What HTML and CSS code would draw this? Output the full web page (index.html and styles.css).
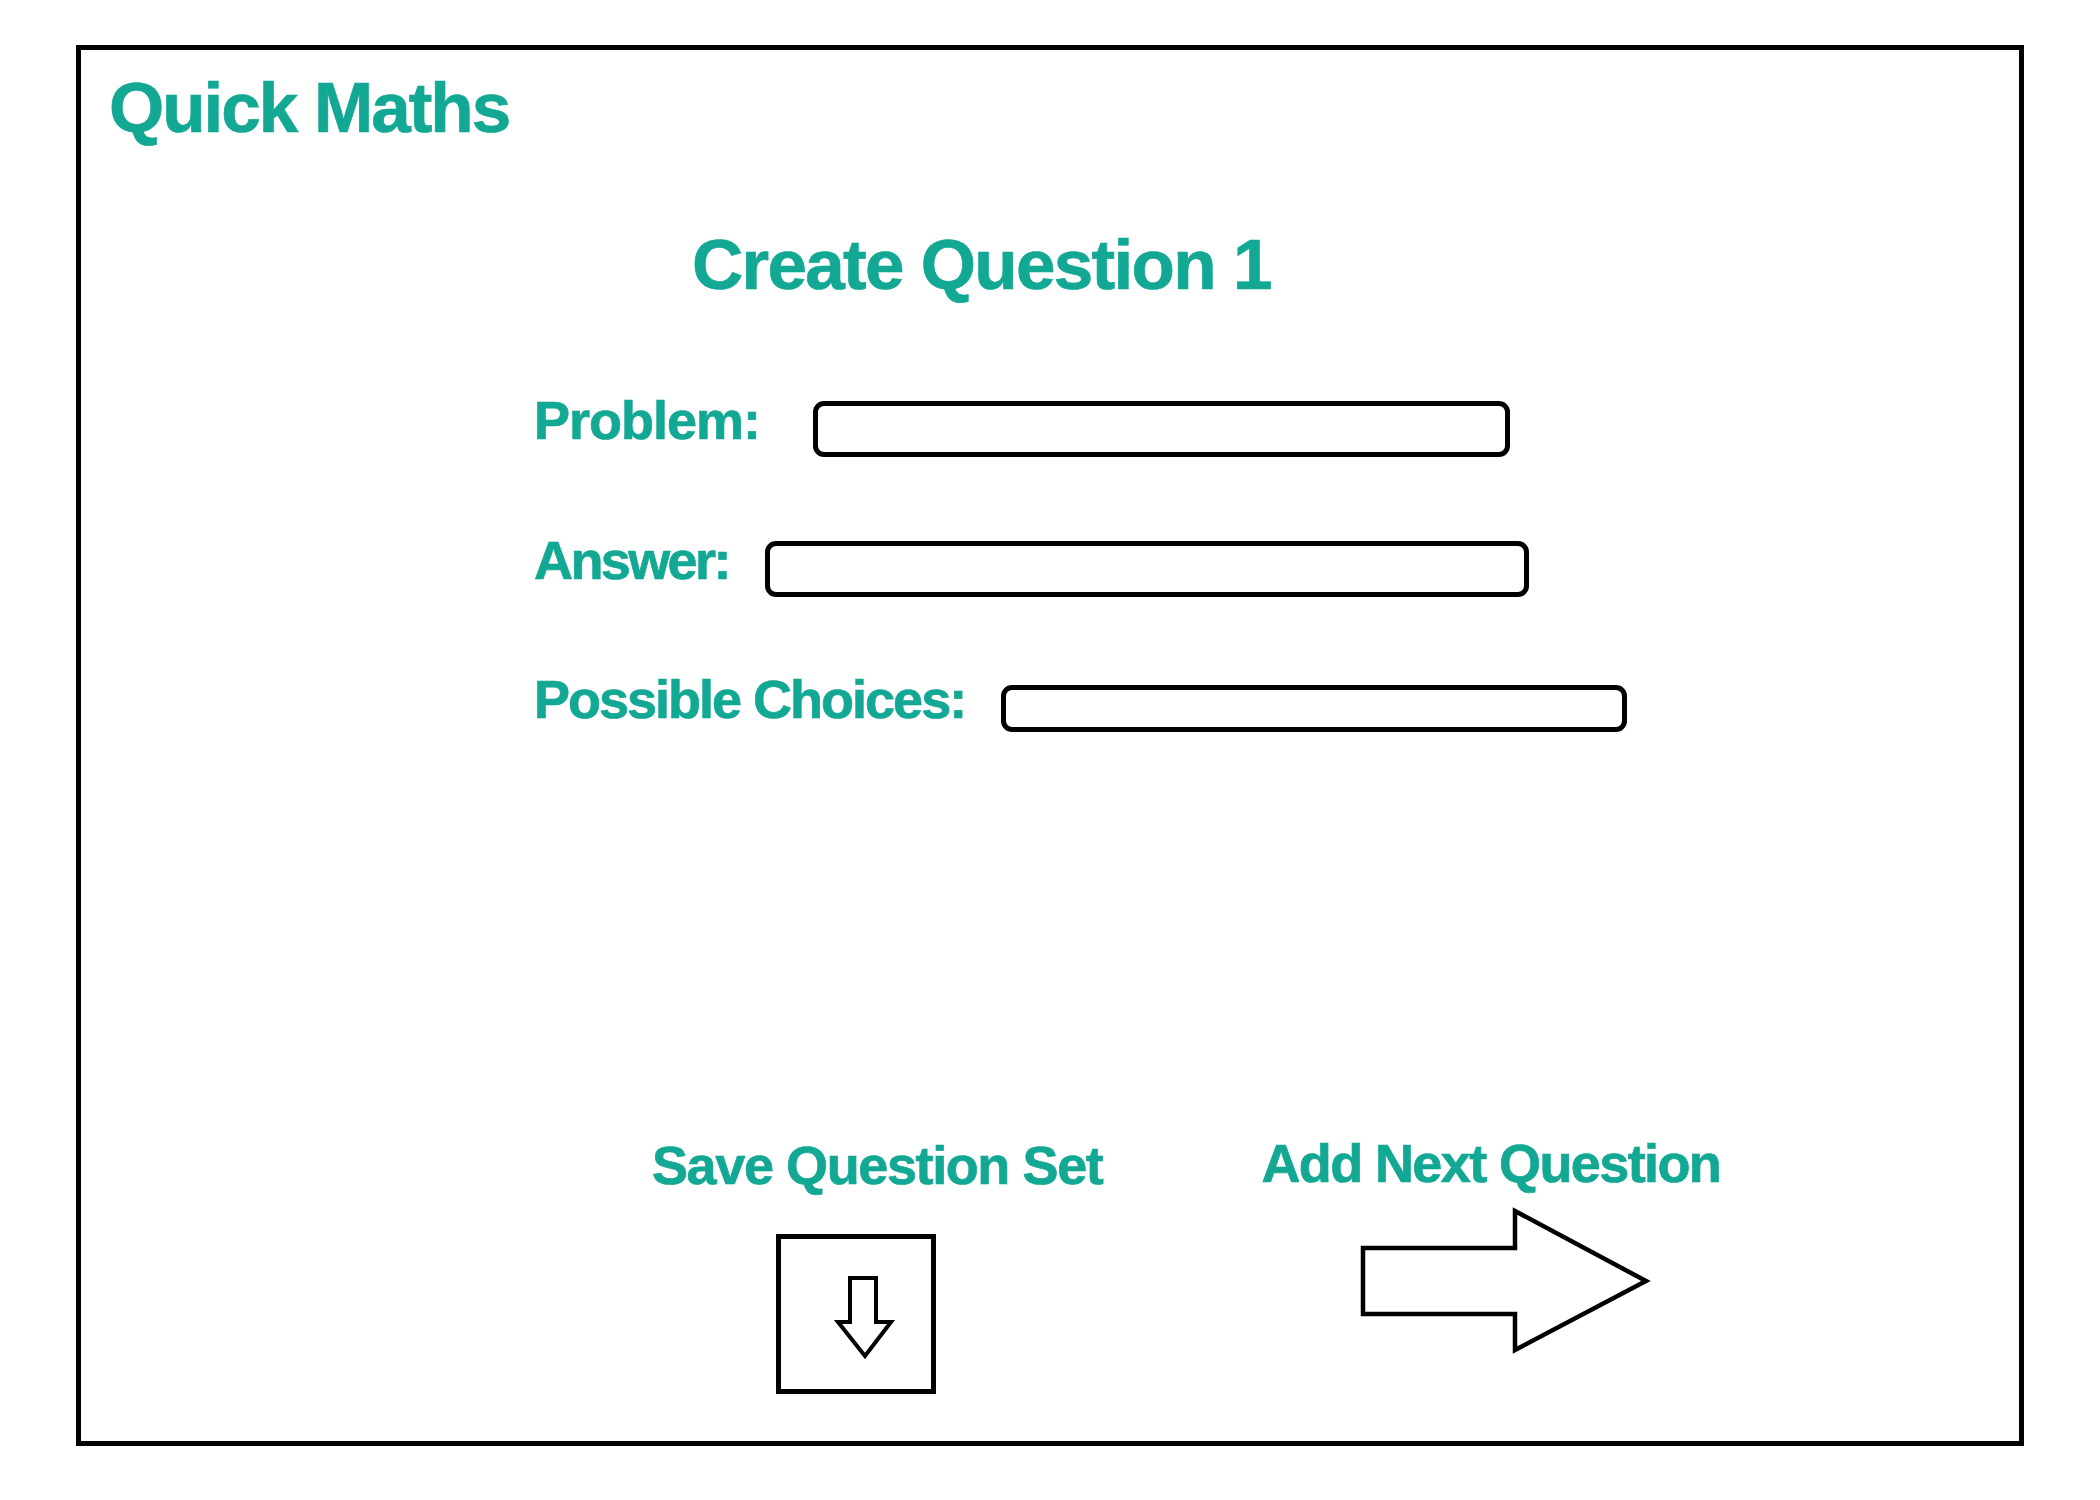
FILE: index.html
```html
<!DOCTYPE html>
<html lang="en">
<head>
<meta charset="utf-8">
<title>Quick Maths - Create Question</title>
<link rel="stylesheet" href="styles.css">
</head>
<body>
<div class="frame">
  <div class="brand">Quick Maths</div>
  <h1 class="heading">Create Question 1</h1>
  <div class="form">
    <div class="row row-problem">
      <span class="label">Problem:</span>
      <span class="field field-problem"></span>
    </div>
    <div class="row row-answer">
      <span class="label">Answer:</span>
      <span class="field field-answer"></span>
    </div>
    <div class="row row-choices">
      <span class="label">Possible Choices:</span>
      <span class="field field-choices"></span>
    </div>
  </div>
  <div class="actions">
    <div class="action action-save">
      <div class="action-label">Save Question Set</div>
      <div class="save-box">
        <svg class="save-icon" width="150" height="150" viewBox="0 0 150 150">
          <polygon points="69,39 95,39 95,83 110,83 84,117 57,83 69,83" fill="#fff" stroke="#000" stroke-width="4" stroke-linejoin="miter"/>
        </svg>
      </div>
    </div>
    <div class="action action-next">
      <div class="action-label">Add Next Question</div>
      <svg class="next-icon" width="294" height="151" viewBox="0 0 294 151">
        <polygon points="4,43 156,43 156,6 287,76 156,145 156,109 4,109" fill="#fff" stroke="#000" stroke-width="4.5" stroke-linejoin="miter"/>
      </svg>
    </div>
  </div>
</div>
</body>
</html>
```

FILE: styles.css
```css
html, body {
  margin: 0;
  padding: 0;
  background: #ffffff;
}

body {
  font-family: "Liberation Sans", Arial, sans-serif;
  color: #13a894;
}

.frame {
  box-sizing: border-box;
  width: 1948px;
  height: 1401px;
  margin: 45px 0 0 76px;
  border: 5px solid #000;
  background: #fff;
}

.brand,
.heading,
.label,
.action-label {
  font-weight: 700;
  color: #13a894;
  -webkit-text-stroke: 0.7px #13a894;
  white-space: nowrap;
}

.brand {
  margin: 18px 0 0 28px;
  font-size: 71px;
  line-height: 80px;
  letter-spacing: -2px;
}

.heading {
  margin: 77px 0 0 0;
  padding-left: 611px;
  font-size: 71px;
  line-height: 80px;
  letter-spacing: -1.7px;
}

.form {
  padding-left: 453px;
}

.row {
  display: flex;
  align-items: flex-start;
}

.label {
  font-size: 54px;
  line-height: 64px;
}

.field {
  display: block;
  box-sizing: border-box;
  border: 5px solid #000;
  border-radius: 11px;
  background: #fff;
}

.row-problem { margin-top: 83px; }
.row-problem .label { letter-spacing: -1px; }
.field-problem {
  width: 697px;
  height: 56px;
  margin: 13px 0 0 53px;
}

.row-answer { margin-top: 71px; }
.row-answer .label { letter-spacing: -2.6px; }
.field-answer {
  width: 764px;
  height: 56px;
  margin: 13px 0 0 36px;
}

.row-choices { margin-top: 70px; }
.row-choices .label { letter-spacing: -2px; }
.field-choices {
  width: 626px;
  height: 47px;
  margin: 18px 0 0 36px;
}

.actions {
  display: flex;
  align-items: flex-start;
  margin-top: 399px;
  padding-left: 571px;
}

.action {
  display: flex;
  flex-direction: column;
  align-items: flex-start;
}

.action-label {
  font-size: 54px;
  line-height: 64px;
}

.action-save {
  margin-top: 2px;
}

.action-save .action-label { letter-spacing: -1.4px; }

.save-box {
  box-sizing: border-box;
  width: 160px;
  height: 160px;
  margin: 37px 0 0 124px;
  border: 5px solid #000;
  background: #fff;
}

.save-icon {
  display: block;
}

.action-next {
  margin-left: 159px;
}

.action-next .action-label { letter-spacing: -1.6px; }

.next-icon {
  display: block;
  margin: 10px 0 0 98px;
}
```
